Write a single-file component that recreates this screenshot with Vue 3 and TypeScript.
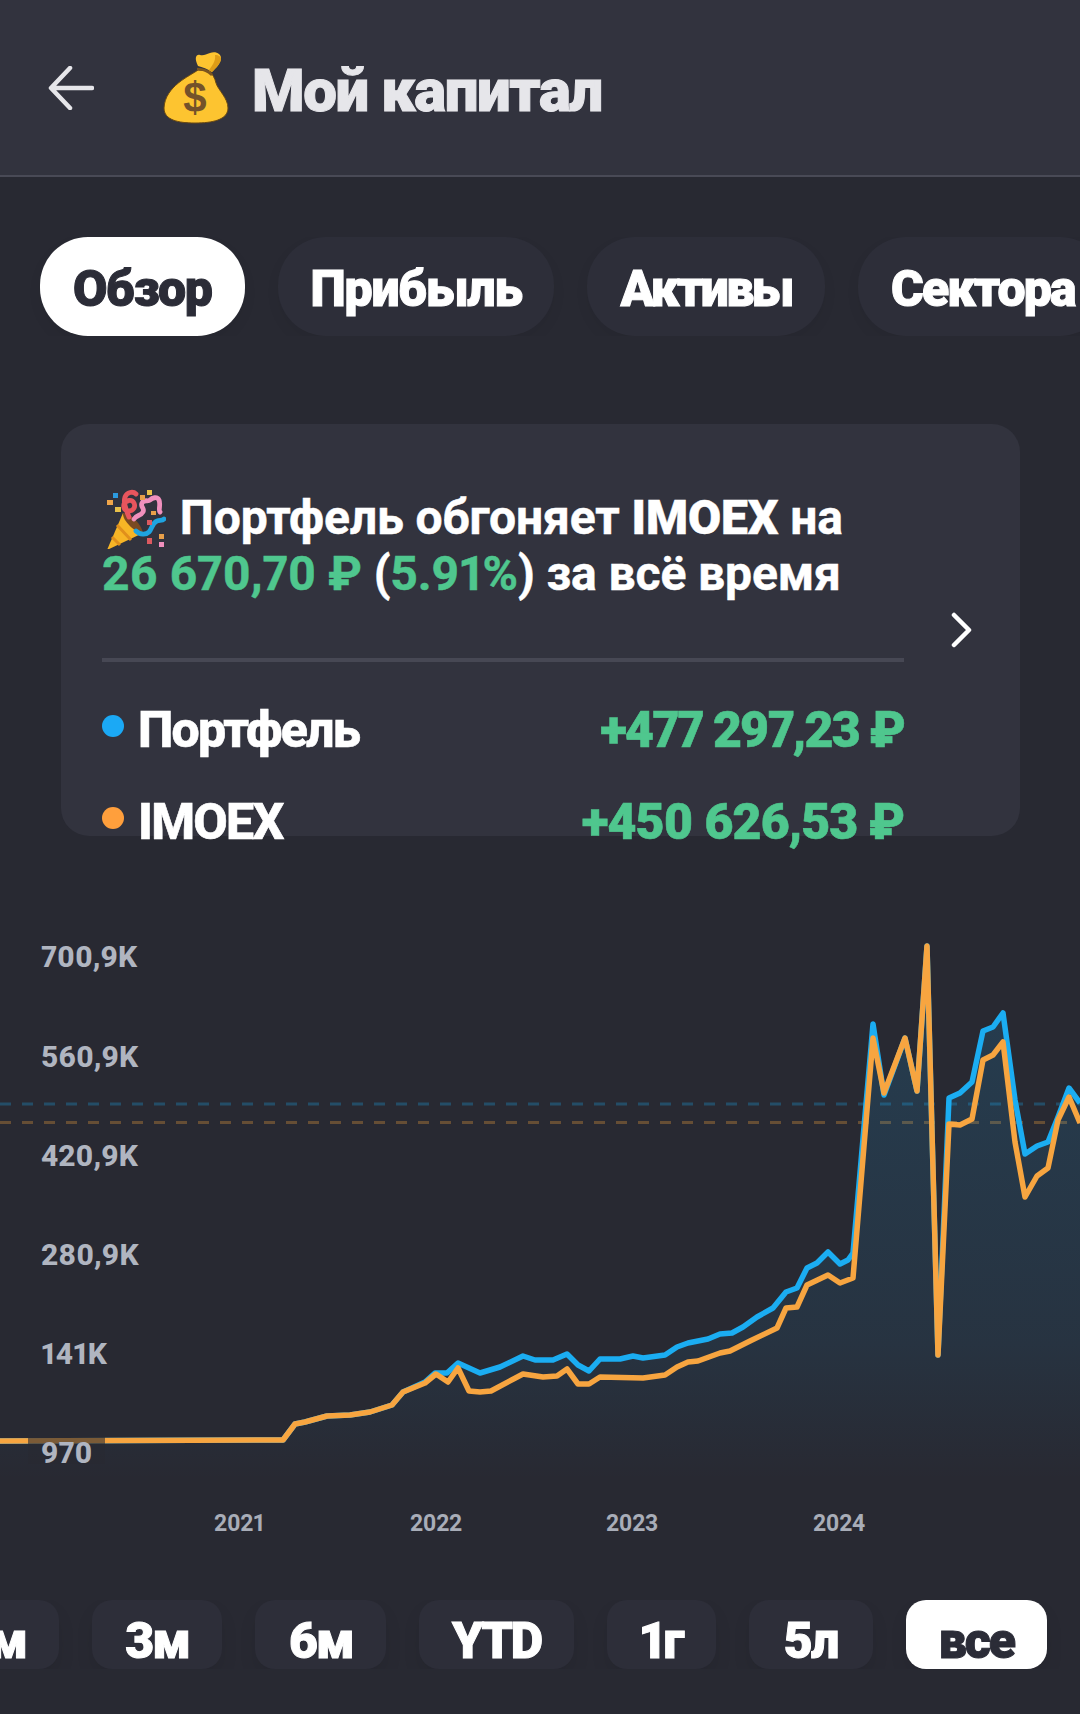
<script setup lang="ts">
interface Pt { x: number; y: number }

const tabs = ['Обзор', 'Прибыль', 'Активы', 'Сектора']
const ranges = ['1м', '3м', '6м', 'YTD', '1г', '5л', 'все']

// y axis labels, top = baseline of the text inside the chart box
const axis = [
  { text: '700,9K', y: 968 },
  { text: '560,9K', y: 1068 },
  { text: '420,9K', y: 1167 },
  { text: '280,9K', y: 1266 },
  { text: '141K', y: 1365 },
  { text: '970', y: 1464 },
]
const years = [
  { text: '2021', x: 239 },
  { text: '2022', x: 436 },
  { text: '2023', x: 632 },
  { text: '2024', x: 839 },
]

const CHART_TOP = 900

const portfolio: number[][] = [
  [0, 1441], [283, 1440], [295, 1424], [305, 1422], [327, 1416], [350, 1415], [370, 1412], [392, 1405],
  [403, 1392], [425, 1382], [435, 1373], [447, 1373], [458, 1363], [480, 1373], [500, 1367], [523, 1356],
  [535, 1360], [553, 1360], [567, 1354], [578, 1365], [589, 1371], [600, 1359], [620, 1359], [633, 1356],
  [643, 1358], [665, 1355], [677, 1347], [688, 1343], [708, 1339], [720, 1334], [732, 1333], [743, 1327],
  [757, 1317], [773, 1308], [786, 1292], [797, 1288], [807, 1268], [817, 1263], [828, 1252], [840, 1264],
  [848, 1260], [853, 1253], [873, 1024], [884, 1095], [905, 1038], [917, 1091], [927, 946], [938, 1355],
  [949, 1098], [960, 1093], [972, 1082], [983, 1031], [993, 1027], [1003, 1013], [1015, 1100], [1025, 1154],
  [1037, 1146], [1048, 1142], [1058, 1117], [1069, 1088], [1080, 1103],
]

const imoex: number[][] = [
  [0, 1441], [283, 1440], [295, 1424], [305, 1422], [327, 1416], [350, 1415], [370, 1412], [392, 1405],
  [403, 1392], [425, 1383], [436, 1374], [448, 1382], [458, 1368], [469, 1391], [480, 1392], [491, 1391],
  [523, 1374], [543, 1377], [557, 1376], [567, 1369], [578, 1384], [589, 1384], [600, 1377], [643, 1378],
  [665, 1375], [677, 1367], [688, 1362], [698, 1361], [720, 1353], [730, 1351], [750, 1341], [777, 1328],
  [786, 1308], [797, 1307], [807, 1285], [828, 1275], [840, 1283], [853, 1278], [873, 1038], [884, 1093],
  [905, 1038], [917, 1091], [927, 946], [938, 1355], [949, 1124], [960, 1125], [972, 1119], [983, 1060],
  [993, 1055], [1003, 1042], [1015, 1142], [1025, 1197], [1037, 1176], [1048, 1168], [1058, 1120],
  [1069, 1097], [1080, 1123],
]

const toLine = (pts: number[][]) => pts.map((p) => p.join(',')).join(' ')
const areaPts = `0,1490 ${toLine(portfolio)} 1080,1490`
const linePos = (p: Pt) => ({ left: `${p.x}px`, top: `${p.y - CHART_TOP}px` })
</script>

<template>
  <div class="page">
    <header class="top">
      <svg class="top__back" width="46" height="44" viewBox="0 0 46 44" fill="none">
        <path d="M44 22H4M22 2 3 22l19 20" stroke="#e6e6ea" stroke-width="4.5" stroke-linecap="round" stroke-linejoin="round" />
      </svg>
      <svg class="top__bag" width="72" height="80" viewBox="20 20 72 80">
        <path d="M58 42C50 48 25 58 24 80c0 12 14 15 31 15s33-3 33-15c0-10-10-18-12-25-1-5-4-9-6-12Z" fill="#fdc430" stroke="#6b4a12" stroke-width="1" />
        <path d="M58 38c-4-8-2-12 2-11 4 1 6-1 10-2 6-2 11 1 11 5 0 5-5 10-9 14-4-3-10-5-14-6Z" fill="#fdc430" />
        <path d="M75 27c4 0 6 2 6 4 0 4-5 9-9 13l-3-2c3-4 7-9 6-15Z" fill="#dd9c17" />
        <path d="M57 41c6 0 11 2 15 6" fill="none" stroke="#7a5520" stroke-width="2.5" />
        <text x="55" y="84" class="top__dollar">$</text>
      </svg>
      <h1 class="top__title">Мой капитал</h1>
    </header>

    <nav class="tabs">
      <button v-for="(t, i) in tabs" :key="t" class="tabs__item" :class="{ 'tabs__item--on': i === 0 }">{{ t }}</button>
    </nav>

    <section class="card">
      <div class="card__main">
        <p class="card__head">
          <svg class="card__party" width="62" height="62" viewBox="14 14 62 62">
            <path d="M17 77 33 40l20 20Z" fill="#f7b526" />
            <path d="M27 52l14 15M22 64l8 8" stroke="#e08f1c" stroke-width="3" fill="none" />
            <path d="M33 40c8 0 18 11 20 20-6 1-21-12-20-20Z" fill="#7a4a22" />
            <path d="M39 44c-3-7-6-14-4-20 2-5 8-6 11-3M34 31c2-4 8-5 10-1s-1 8-5 8-6-3-5-7" fill="none" stroke="#e8555d" stroke-width="4.8" stroke-linecap="round" />
            <path d="M44 46c2-4 7-3 9-7s-3-5-1-9 6-1 8-3 7-4 9 0c2 5-1 10 1 12" fill="none" stroke="#f090bd" stroke-width="4.8" stroke-linecap="round" />
            <path d="M46 58c4 4 10 4 13 1s3-9 8-11c3-1 5 0 7-2" fill="none" stroke="#1fa4e0" stroke-width="4.8" stroke-linecap="round" />
            <rect x="23" y="20" width="5" height="5" fill="#2c9be0" />
            <rect x="17" y="27" width="6" height="5" fill="#f0a64a" />
            <rect x="25" y="34" width="6" height="5" fill="#e8c04a" />
            <rect x="50" y="22" width="5" height="5" fill="#e8a04a" />
            <rect x="57" y="17" width="5" height="5" fill="#e8c04a" />
            <rect x="61" y="38" width="5" height="4" fill="#e8a04a" />
            <rect x="57" y="47" width="5" height="5" fill="#dc5a60" />
            <rect x="57" y="65" width="5" height="6" fill="#dc5a60" />
            <rect x="69" y="61" width="5" height="5" fill="#e8a04a" />
            <rect x="69" y="69" width="5" height="5" fill="#f090bd" />
          </svg>
          Портфель обгоняет <b>IMOEX</b> на<br />
          <span class="up">26 670,70 ₽</span> (<span class="up">5.91%</span>) за всё время
        </p>
        <div class="card__rule"></div>
        <div class="row">
          <span class="row__dot row__dot--blue"></span>
          <span class="row__name">Портфель</span>
          <span class="row__val row__val--tight">+477 297,23 ₽</span>
        </div>
        <div class="row">
          <span class="row__dot row__dot--orange"></span>
          <span class="row__name">IMOEX</span>
          <span class="row__val">+450 626,53 ₽</span>
        </div>
      </div>
      <svg class="card__chev" width="24" height="36" viewBox="0 0 24 36" fill="none">
        <path d="M4 3l15 15L4 33" stroke="#fff" stroke-width="4.5" stroke-linecap="round" stroke-linejoin="round" />
      </svg>
    </section>

    <section class="chart">
      <svg class="chart__svg" width="1080" height="660" :viewBox="`0 ${CHART_TOP} 1080 660`">
        <defs>
          <linearGradient id="fade" gradientUnits="userSpaceOnUse" x1="0" y1="1020" x2="0" y2="1480">
            <stop offset="0" stop-color="#1aa8ee" stop-opacity="0.15" />
            <stop offset="0.7" stop-color="#1aa8ee" stop-opacity="0.08" />
            <stop offset="1" stop-color="#1aa8ee" stop-opacity="0" />
          </linearGradient>
        </defs>
        <line x1="0" x2="1080" y1="1104" y2="1104" stroke="#1badf2" stroke-opacity="0.28" stroke-width="3" stroke-dasharray="11 11" />
        <line x1="0" x2="1080" y1="1122.5" y2="1122.5" stroke="#f7a540" stroke-opacity="0.3" stroke-width="3" stroke-dasharray="11 11" />
        <polygon :points="areaPts" fill="url(#fade)" />
        <polyline :points="toLine(portfolio)" fill="none" stroke="#1badf2" stroke-width="5.5" stroke-linejoin="round" />
        <polyline :points="toLine(imoex)" fill="none" stroke="#f7a540" stroke-width="5.5" stroke-linejoin="round" />
      </svg>
      <span
        v-for="a in axis"
        :key="a.text"
        class="chart__y"
        :style="linePos({ x: 28, y: a.y })"
      >{{ a.text }}</span>
      <span
        v-for="y in years"
        :key="y.text"
        class="chart__x"
        :style="linePos({ x: y.x, y: 1533 })"
      >{{ y.text }}</span>
    </section>

    <nav class="ranges">
      <button v-for="r in ranges" :key="r" class="ranges__item" :class="{ 'ranges__item--on': r === 'все' }">{{ r }}</button>
    </nav>
  </div>
</template>

<style>
html,
body {
  margin: 0;
  background: #282932;
  overflow: hidden;
}
</style>

<style scoped>
.page {
  width: 1080px;
  height: 1714px;
  overflow: hidden;
  background: #282932;
  color: #fff;
  font-family: Roboto, "Noto Sans", sans-serif;
  font-variant-numeric: proportional-nums;
}

.top {
  height: 175px;
  box-sizing: content-box;
  background: #32333e;
  border-bottom: 2px solid #494a56;
  display: flex;
  align-items: center;
  padding-left: 48px;
}
.top__back {
  margin-right: 66px;
}
.top__bag {
  margin-right: 20px;
}
.top__dollar {
  font: 700 42px "Liberation Sans", sans-serif;
  fill: #74522a;
  text-anchor: middle;
}
.top__title {
  margin: 6px 0 0;
  font-size: 60px;
  font-weight: 900;
  letter-spacing: -1.4px;
  color: #e6e6ea;
  -webkit-text-stroke: 1px #e6e6ea;
}

.tabs {
  display: flex;
  gap: 33px;
  margin-top: 60px;
  padding-left: 40px;
  overflow: hidden;
}
.tabs__item {
  flex-shrink: 0;
  height: 99px;
  padding: 4px 33px 0;
  border: 0;
  border-radius: 48px;
  background: #2d2e39;
  color: #fff;
  font: inherit;
  font-size: 50px;
  font-weight: 900;
  letter-spacing: -1.4px;
  -webkit-text-stroke: 1px currentColor;
  box-shadow: 0 6px 14px rgba(0, 0, 0, 0.06);
}
.tabs__item:nth-child(2) {
  letter-spacing: -1.2px;
}
.tabs__item:nth-child(3) {
  letter-spacing: -2.5px;
}
.tabs__item:nth-child(4) {
  letter-spacing: -1.9px;
}
.tabs__item--on {
  background: #fff;
  color: #2b2c37;
}

.card {
  width: 959px;
  height: 412px;
  margin: 88px 0 0 61px;
  box-sizing: border-box;
  padding: 0 46px 0 41px;
  background: #32333e;
  border-radius: 28px;
  display: flex;
  align-items: center;
  justify-content: space-between;
}
.card__main {
  width: 802px;
  height: 412px;
  flex-shrink: 0;
  padding-top: 66px;
  box-sizing: border-box;
}
.card__head {
  margin: 0;
  height: 168px;
  font-size: 48px;
  font-weight: 700;
  line-height: 56px;
  letter-spacing: -0.1px;
  -webkit-text-stroke: 0.5px currentColor;
}
.card__head b {
  font-weight: 900;
}
.card__party {
  vertical-align: middle;
  margin: -14px 2px -8px 2px;
}
.up {
  color: #4fc78e;
}
.card__rule {
  height: 4px;
  background: #474854;
  margin-bottom: 22px;
}
.card__chev {
  flex-shrink: 0;
}
.row {
  display: flex;
  align-items: center;
  height: 92px;
  font-size: 50px;
}
.row__dot {
  width: 22px;
  height: 22px;
  border-radius: 50%;
  margin: -8px 14px 0 0;
}
.row__dot--blue {
  background: #1ba9f5;
}
.row__dot--orange {
  background: #ff9f3c;
}
.row__name {
  font-weight: 800;
  letter-spacing: -1.7px;
  -webkit-text-stroke: 0.6px currentColor;
}
.row__val {
  margin-left: auto;
  font-weight: 900;
  letter-spacing: -1px;
  color: #4fc78e;
  -webkit-text-stroke: 0.6px currentColor;
}
.row__val--tight {
  letter-spacing: -1.8px;
}

.chart {
  position: relative;
  height: 660px;
  margin-top: 64px;
}
.chart__svg {
  display: block;
}
.chart__y {
  position: absolute;
  transform: translateY(-100%);
  padding: 20px 13px 0;
  line-height: 22px;
  font-size: 30px;
  font-weight: 800;
  color: #b0b5c0;
  background: rgba(40, 41, 50, 0.6);
}
.chart__x {
  position: absolute;
  transform: translate(-50%, -100%);
  line-height: 18px;
  font-size: 23px;
  font-weight: 700;
  letter-spacing: -0.3px;
  color: #a8adb8;
}

.ranges {
  display: flex;
  justify-content: flex-end;
  gap: 33px;
  margin-top: 40px;
  padding-right: 33px;
  overflow: hidden;
}
.ranges__item {
  flex-shrink: 0;
  height: 69px;
  padding: 14px 33px 0;
  border: 0;
  border-radius: 20px;
  background: #2d2e39;
  color: #fff;
  font: inherit;
  font-size: 50px;
  font-weight: 900;
  letter-spacing: -1.6px;
  line-height: 55px;
  -webkit-text-stroke: 1px currentColor;
  box-shadow: 0 10px 18px rgba(0, 0, 0, 0.08);
}
.ranges__item:nth-child(4) {
  letter-spacing: -2.3px;
}
.ranges__item:nth-child(6) {
  padding: 14px 35px 0;
}
.ranges__item--on {
  background: #fff;
  color: #2b2c37;
  letter-spacing: -2px;
}
</style>
